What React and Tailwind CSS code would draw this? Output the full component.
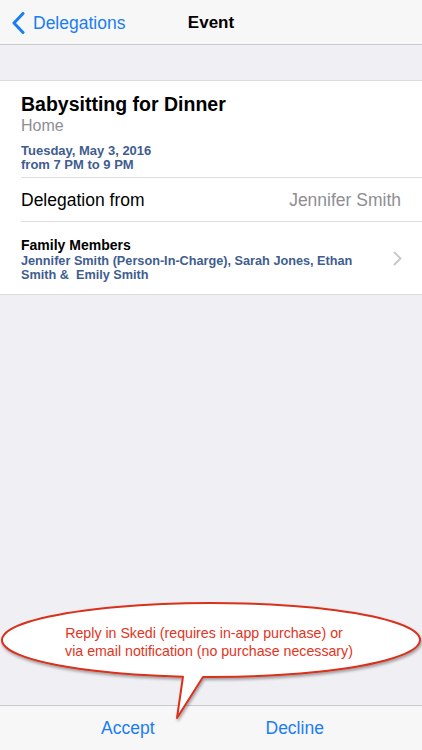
import React from "react";

const Chevron = () => (
  <svg width="13" height="22" viewBox="0 0 13 22" fill="none">
    <path d="M11 1.5 L2 11 L11 20.5" stroke="#1b7cf4" strokeWidth="3" strokeLinecap="round" strokeLinejoin="round" />
  </svg>
);

const Balloon = () => (
  <div className="absolute inset-0 pointer-events-none">
    <svg width="422" height="750" className="absolute left-0 top-0">
      <defs>
        <filter id="shadow" x="-10%" y="-30%" width="120%" height="160%">
          <feDropShadow dx="1" dy="2" stdDeviation="1.5" floodColor="#000" floodOpacity="0.35" />
        </filter>
      </defs>
      <path
        d="M203 676.973 A209 37 0 1 0 183 676.667 L177 718 Z"
        fill="#ffffff"
        stroke="#d8321d"
        strokeWidth="2"
        strokeLinejoin="round"
        filter="url(#shadow)"
      />
    </svg>
    <div className="absolute left-0 top-[624px] w-[418px] flex flex-col items-center text-[14.2px] leading-[18px] text-[#e2341e] font-['Liberation_Sans',Arial,sans-serif]">
      <span className="pr-[10px]">Reply in Skedi (requires in-app purchase) or</span>
      <span>via email notification (no purchase necessary)</span>
    </div>
  </div>
);

export default function App() {
  return (
    <div className="relative w-[422px] h-[750px] overflow-hidden bg-[#efeff4] flex flex-col font-['Liberation_Sans',Arial,sans-serif]">
      <div className="relative h-[45px] shrink-0 pt-[2px] bg-[#f7f7f8] border-b border-[#c9c9ce] flex items-center">
        <div className="flex items-center pl-[12px] gap-[8px] text-[17.5px] text-[#1b7cf4]">
          <Chevron />
          <span>Delegations</span>
        </div>
        <span className="absolute left-0 right-0 text-center text-[17px] font-bold text-black pointer-events-none">Event</span>
      </div>

      <div className="h-[35px] shrink-0" />

      <div className="bg-white border-y border-[#dcdce0]">
        <div className="pl-[21px] pt-[11px] pb-[5px]">
          <div className="text-[19.5px] font-bold leading-[24px] text-black">Babysitting for Dinner</div>
          <div className="text-[16px] leading-[20px] text-[#8e8e93]">Home</div>
          <div className="mt-[8px] text-[13px] font-bold leading-[14px] text-[#405d8f]">
            <div>Tuesday, May 3, 2016</div>
            <div>from 7 PM to 9 PM</div>
          </div>
        </div>
        <div className="ml-[21px] border-t border-[#dededf]" />
        <div className="h-[43px] pl-[21px] pr-[21px] pt-[2px] flex items-center justify-between text-[17.5px]">
          <span className="text-black">Delegation from</span>
          <span className="text-[#8e8e93]">Jennifer Smith</span>
        </div>
        <div className="ml-[21px] border-t border-[#dededf]" />
        <div className="h-[72px] pl-[21px] pr-[20px] flex items-center justify-between">
          <div className="pt-[2px]">
            <div className="text-[14px] font-bold leading-[17px] text-black">Family Members</div>
            <div className="text-[12.7px] font-bold leading-[14px] text-[#405d8f]">
              Jennifer Smith (Person-In-Charge), Sarah Jones, Ethan
              <br />
              <span className="whitespace-pre">Smith &amp;  Emily Smith</span>
            </div>
          </div>
          <svg width="9" height="15" viewBox="0 0 9 15" fill="none">
            <path d="M1.5 1.5 L7.5 7.5 L1.5 13.5" stroke="#c7c7cc" strokeWidth="1.8" strokeLinecap="round" strokeLinejoin="round" />
          </svg>
        </div>
      </div>

      <div className="flex-1" />

      <div className="h-[45px] shrink-0 bg-[#f7f7f8] border-t border-[#c9c9ce] flex items-center pl-[101px] gap-[111px] text-[17.5px] text-[#1b7cf4]">
        <span>Accept</span>
        <span>Decline</span>
      </div>

      <Balloon />
    </div>
  );
}
